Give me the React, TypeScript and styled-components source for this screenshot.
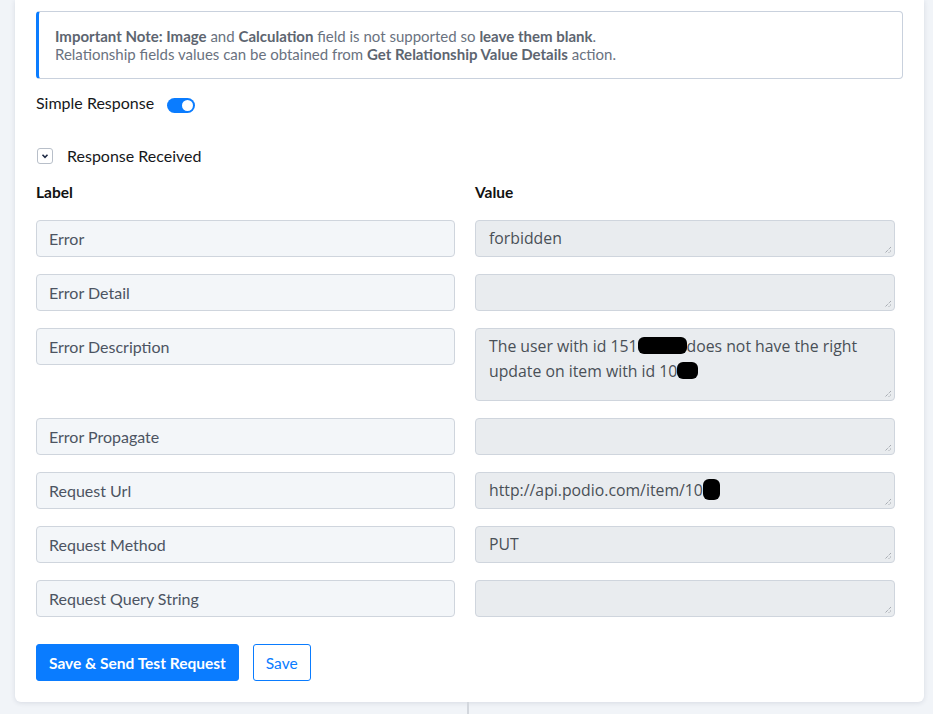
import styled, { createGlobalStyle } from "styled-components";

const GlobalStyle = createGlobalStyle`
  html, body {
    margin: 0;
    padding: 0;
    background: #f1f4f8;
    font-family: "Lato", "Open Sans", sans-serif;
    overflow: hidden;
  }
  * { box-sizing: border-box; }
`;

const Page = styled.div`
  height: 714px;
  display: flex;
  flex-direction: column;
  align-items: flex-start;
`;

const Card = styled.section`
  margin-left: 15px;
  width: 909px;
  background: #fff;
  border-radius: 0 0 6px 6px;
  box-shadow: 0 1px 5px rgba(30, 45, 70, 0.12);
  padding: 11px 21px 21px;
  display: flex;
  flex-direction: column;
`;

const Connector = styled.div`
  margin-left: 467px;
  width: 2px;
  flex: 1;
  background: #d3d7dd;
`;

const Note = styled.div`
  border: 1px solid #c9d1dd;
  border-left: 3px solid #0a7cff;
  border-radius: 4px;
  padding: 15px 16px;
  font-size: 15px;
  line-height: 18px;
  color: #6a7280;

  b {
    font-weight: 700;
    color: #5d6570;
  }
`;

const ToggleRow = styled.div`
  margin-top: 14px;
  display: flex;
  align-items: flex-start;
  gap: 13px;
  font-size: 16px;
  line-height: 20px;
  color: #16181b;
`;

const Switch = styled.span<{ $on?: boolean }>`
  margin-top: 5px;
  width: 28px;
  height: 15px;
  border-radius: 8px;
  background: ${(p) => (p.$on ? "#0a7cff" : "#c9d1dd")};
  position: relative;

  &::after {
    content: "";
    position: absolute;
    top: 2px;
    left: ${(p) => (p.$on ? "15px" : "2px")};
    width: 11px;
    height: 11px;
    border-radius: 50%;
    background: #fff;
  }
`;

const CollapseRow = styled.div`
  margin-top: 33px;
  display: flex;
  align-items: center;
  gap: 14px;
  font-size: 16px;
  line-height: 20px;
  color: #16181b;
`;

const Chevron = styled.span`
  width: 16px;
  height: 16px;
  border: 1px solid #b8bfc9;
  border-radius: 3px;
  display: flex;
  align-items: center;
  justify-content: center;
  margin-left: 1px;
`;

const Grid = styled.div`
  display: grid;
  grid-template-columns: 419px 420px;
  column-gap: 20px;
  row-gap: 17px;
  align-items: start;
`;

const Header = styled(Grid)`
  margin-top: 16px;
  margin-bottom: 18px;
  font-size: 15.5px;
  font-weight: 700;
  line-height: 20px;
  color: #111;
`;

const KeyField = styled.div`
  height: 37px;
  background: #f3f6f9;
  border: 1px solid #cfd5dd;
  border-radius: 4px;
  padding: 0 12px;
  display: flex;
  align-items: center;
  font-size: 16px;
  color: #4c5462;
`;

const ValueField = styled.div<{ $rows?: number }>`
  position: relative;
  height: ${(p) => (p.$rows && p.$rows > 1 ? 73 : 37)}px;
  background: #e9ecef;
  border: 1px solid #cfd5dd;
  border-radius: 4px;
  padding: 5px 24px 5px 13px;
  font-family: "Open Sans", "Lato", sans-serif;
  font-size: 15.8px;
  line-height: 25px;
  color: #495057;
`;

const Grip = styled.svg`
  position: absolute;
  right: 2px;
  bottom: 2px;
`;

const Blot = styled.span<{ $w: number; $h: number }>`
  display: inline-block;
  vertical-align: middle;
  width: ${(p) => p.$w}px;
  height: ${(p) => p.$h}px;
  background: #000;
  border-radius: 6px;
  margin-top: -4px;
`;

const Actions = styled.div`
  margin-top: 27px;
  display: flex;
  gap: 14px;
`;

const Button = styled.button<{ $outline?: boolean }>`
  height: 37px;
  padding: 0 12px;
  border-radius: 3px;
  border: 1px solid #0a7cff;
  background: ${(p) => (p.$outline ? "#fff" : "#0a7cff")};
  color: ${(p) => (p.$outline ? "#0a7cff" : "#fff")};
  font-family: "Lato", sans-serif;
  font-size: 15.5px;
  font-weight: ${(p) => (p.$outline ? 400 : 700)};
  cursor: pointer;
`;

function ResizeGrip() {
  return (
    <Grip width="9" height="9" viewBox="0 0 9 9">
      <path d="M8 2 L2 8 M8 5.5 L5.5 8" stroke="#8b9098" strokeWidth="1" strokeDasharray="1 1" />
    </Grip>
  );
}

type Row = { label: string; value: React.ReactNode; rows?: number };

const rows: Row[] = [
  { label: "Error", value: "forbidden" },
  { label: "Error Detail", value: "" },
  {
    label: "Error Description",
    rows: 3,
    value: (
      <>
        The user with id 151<Blot $w={49} $h={17} />does not have the right update on item
        with id 10<Blot $w={21} $h={17} />
      </>
    ),
  },
  { label: "Error Propagate", value: "" },
  {
    label: "Request Url",
    value: (
      <>
        http://api.podio.com/item/10<Blot $w={17} $h={21} />
      </>
    ),
  },
  { label: "Request Method", value: "PUT" },
  { label: "Request Query String", value: "" },
];

export default function App() {
  return (
    <Page>
      <GlobalStyle />
      <Card>
        <Note>
          <b>Important Note: Image</b> and <b>Calculation</b> field is not supported so{" "}
          <b>leave them blank</b>.
          <br />
          Relationship fields values can be obtained from <b>Get Relationship Value Details</b>{" "}
          action.
        </Note>

        <ToggleRow>
          Simple Response
          <Switch $on />
        </ToggleRow>

        <CollapseRow>
          <Chevron>
            <svg width="10" height="10" viewBox="0 0 10 10">
              <path d="M2.5 3.8 L5 6.3 L7.5 3.8" fill="none" stroke="#1f2a44" strokeWidth="1.6" />
            </svg>
          </Chevron>
          Response Received
        </CollapseRow>

        <Header>
          <span>Label</span>
          <span>Value</span>
        </Header>

        <Grid>
          {rows.map((r) => (
            <>
              <KeyField key={r.label + "-k"}>{r.label}</KeyField>
              <ValueField key={r.label + "-v"} $rows={r.rows}>
                {r.value}
                <ResizeGrip />
              </ValueField>
            </>
          ))}
        </Grid>

        <Actions>
          <Button>Save &amp; Send Test Request</Button>
          <Button $outline>Save</Button>
        </Actions>
      </Card>
      <Connector />
    </Page>
  );
}
